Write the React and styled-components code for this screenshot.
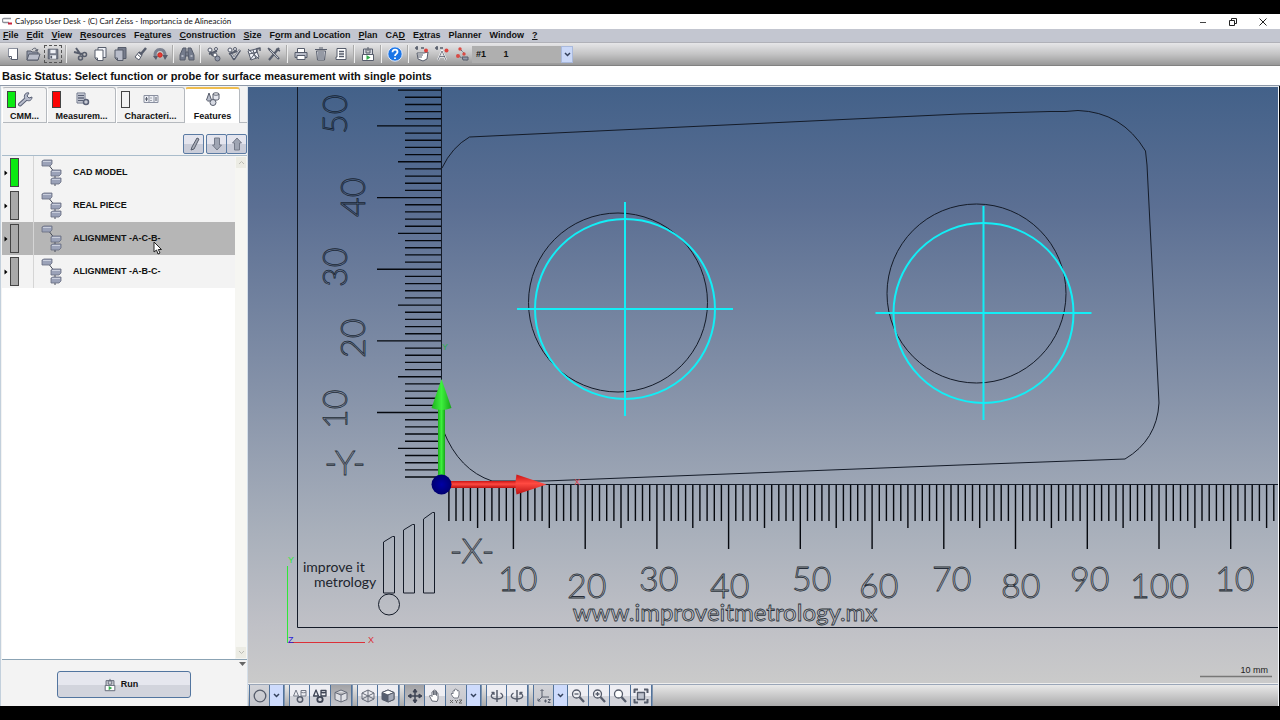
import React from "react";
import styled, { createGlobalStyle, css } from "styled-components";

const GlobalStyle = createGlobalStyle`
  * {
    box-sizing: border-box;
  }

  body {
    margin: 0;
    background: #000;
  }

  button, select {
    margin: 0;
    padding: 0;
    font: inherit;
    color: inherit;
    border: 0;
    background: none;
  }
`;

const Desk = styled.div`
  display: flex;
  flex-direction: column;
  height: 100vh;
  padding: 14px 0;
  font: bold 9px/11px "Liberation Sans", Arial, sans-serif;
  color: #111;
  background: #000;
`;

const TitleBar = styled.header`
  display: flex;
  align-items: center;
  flex: none;
  height: 15px;
  padding: 0 2px;
  background: #fff;
`;

const Title = styled.h1`
  flex: 1;
  margin: 0 0 0 2px;
  font: 400 8px/15px Lato, "Open Sans", sans-serif;
  color: #111;
`;

const WindowButton = styled.button`
  display: grid;
  place-items: center;
  width: 30px;
  height: 15px;
`;

const MenuBar = styled.nav`
  display: flex;
  flex: none;
  gap: 8px;
  height: 14px;
  padding: 0 3px;
  background: #c3c6d0;
  border-bottom: 1px solid #b0b1b8;
`;

const MenuItem = styled.button`
  line-height: 13px;
`;

const ToolBar = styled.div`
  display: flex;
  align-items: center;
  flex: none;
  height: 23px;
  padding: 0 3px;
  background: linear-gradient(#e6e6e8, #c4c4c5 50%, #989898);
  border-bottom: 1px solid #818181;
`;

const ToolButton = styled.button`
  display: grid;
  place-items: center;
  width: 20px;
  height: 20px;
  ${({ $active }) =>
    $active &&
    css`
      width: 18px;
      height: 18px;
      margin: 0 1px;
      border: 1px dashed #555;
    `}
`;

const Separator = styled.span`
  width: 1px;
  height: 18px;
  margin: 0 3px;
  background: #eee;
  box-shadow: -1px 0 #aaa;
`;

const ProbePicker = styled.label`
  display: grid;
  grid-template-columns: 89px 12px;
  height: 17px;
  background: #afafaf;
`;

const ProbeSelect = styled.select`
  grid-area: 1 / 1 / 2 / 3;
  padding-left: 4px;
  appearance: none;
  outline: none;
`;

const Chevron = styled.span`
  display: grid;
  place-items: center;
  background: #cad8f8;
  border: 1px solid #a9b9dc;
  pointer-events: none;
`;

const PickerChevron = styled(Chevron)`
  grid-area: 1 / 2;
`;

const Status = styled.p`
  flex: none;
  height: 19px;
  margin: 0;
  padding: 0 2px;
  font-size: 11px;
  line-height: 20px;
  background: #fff;
`;

const Workspace = styled.main`
  display: grid;
  grid-template-columns: 247px minmax(0, 1fr);
  flex: 1;
  min-height: 0;
  border-top: 1px solid #8d98a8;
`;

const Sidebar = styled.aside`
  display: flex;
  flex-direction: column;
  min-height: 0;
  padding-left: 1px;
  background: #f3f3f3;
  border-left: 1px solid #c3d0dc;
`;

const TabList = styled.div`
  display: flex;
  flex: none;
  height: 37px;
  padding-top: 1px;
  border-bottom: 1px solid #b5b9be;
`;

const Tab = styled.button`
  display: grid;
  grid-template: 20px 14px / 9px 1fr 9px;
  align-items: center;
  justify-items: center;
  width: ${({ $wide }) => ($wide ? 69 : 45)}px;
  height: 36px;
  padding: 1px 4px;
  border: 1px solid #b5b9be;
  border-left-color: #fff;
  border-bottom: 0;
  border-radius: 3px 3px 0 0;
  ${({ $selected }) =>
    $selected &&
    css`
      width: 55px;
      padding-top: 0;
      background: #fff;
      border-top: 2px solid #f0bd4e;
    `}
`;

const TabLabel = styled.span`
  grid-column: 1 / 4;
  line-height: 12px;
  white-space: nowrap;
`;

const TabIcon = styled.span`
  grid-column: 2;
  grid-row: 1;
  display: grid;
`;

const Swatch = styled.span`
  width: 9px;
  height: 17px;
  background: ${({ $color }) => $color};
  border: 1px solid #444;
`;

const TreeActions = styled.div`
  display: flex;
  justify-content: flex-end;
  align-items: flex-end;
  flex: none;
  height: 32px;
  padding-bottom: 1px;
`;

const ActionButton = styled.button`
  display: grid;
  place-items: center;
  width: 21px;
  height: 20px;
  background: linear-gradient(#e4e5ee 50%, #c9ccd8 50%);
  border: 1px solid #5b7ba3;
  border-radius: 2px;
  margin-left: ${({ $joined }) => ($joined ? "-1px" : "2px")};
`;

const TreeFrame = styled.div`
  display: grid;
  grid-template-columns: minmax(0, 1fr) 12px;
  flex: 1;
  min-height: 0;
  background: #fff;
  border-top: 1px solid #a9bccb;
  border-bottom: 1px solid #8ba3b4;
`;

const Tree = styled.ul`
  margin: 0;
  padding: 0;
  list-style: none;
`;

const TreeRow = styled.button`
  display: grid;
  grid-template-columns: 8px 10px 13px 31px 1fr;
  align-items: center;
  width: 100%;
  height: 33px;
  text-align: left;
  background: ${({ $selected }) => ($selected ? "#b6b6b6" : "#f3f3f3")};
`;

const TreeSwatch = styled(Swatch)`
  height: 29px;
`;

const TreeIconCell = styled.span`
  display: grid;
  align-items: center;
  grid-column: 4;
  height: 33px;
  padding-left: 7px;
  border-left: 1px solid #d5d5d5;
`;

const TreeLabel = styled.span`
  position: relative;
  justify-self: start;
  padding-left: 9px;
`;

const Pointer = styled.svg`
  position: absolute;
  right: -2px;
  top: 8px;
`;

const ScrollTrack = styled.div`
  display: flex;
  flex-direction: column;
  justify-content: space-between;
  padding: 1px;
  background: #f6f6f2;
`;

const ScrollButton = styled.button`
  display: grid;
  place-items: center;
  height: 11px;
  background: #ecece4;
`;

const SidebarFooter = styled.footer`
  display: grid;
  grid-template-columns: 1fr 134px 1fr;
  flex: none;
  height: 46px;
  padding-top: 11px;
`;

const RunButton = styled.button`
  grid-column: 2;
  display: flex;
  align-items: center;
  justify-content: center;
  gap: 4px;
  height: 27px;
  margin: 0 1px 0 -1px;
  padding-right: 6px;
  background: linear-gradient(#e6e7ee 50%, #d2d4dc 50%);
  border: 1px solid #52759f;
  border-radius: 3px;
`;

const Collapse = styled.svg`
  justify-self: end;
  margin: -9px 1px 0 0;
`;

const Viewer = styled.section`
  display: grid;
  grid-template-rows: minmax(0, 1fr) 22px;
  min-width: 0;
  min-height: 0;
  margin-right: 1px;
  border-left: 1px solid #d5dfe9;
  border-right: 1px solid #f4f7fa;
  border-top: 1px solid #dfe5ea;
`;

const Scene = styled.svg`
  display: block;
  width: 100%;
  height: 100%;
  min-height: 0;
  border-bottom: 1px solid #eee;
`;

const Engraving = styled.text`
  font: 300 34px Lato, sans-serif;
  fill: none;
  stroke: #0d1522;
  stroke-width: 0.8px;
  opacity: 0.85;
`;

const Website = styled(Engraving)`
  font-size: 24px;
  font-weight: 400;
  text-anchor: middle;
`;

const Brand = styled.text`
  font: 400 14px Lato, sans-serif;
  fill: #20242c;
`;

const AxisLabel = styled.text`
  font: 400 9px "Liberation Sans", sans-serif;
`;

const ViewBar = styled.div`
  display: flex;
  gap: 5px;
  padding: 0 1px;
  background: linear-gradient(#e9e9e9, #aaaaab);
  border-top: 1px solid #9aa6b8;
`;

const ViewGroup = styled.div`
  display: flex;
  border-left: 1px solid #52739b;
  box-shadow: 1px 0 #7f93ad;
`;

const buttonFill = {
  raised: "linear-gradient(#eeeef3 50%, #d3d4da 50%)",
  pressed: "linear-gradient(#a2a2a5, #c6c7cc)",
  soft: "linear-gradient(#d2d3d8, #c5c6cc)",
};

const ViewButton = styled.button`
  display: grid;
  place-items: center;
  width: 21px;
  background: ${({ $fill = "raised" }) => buttonFill[$fill]};
  border-right: 1px solid #52739b;

  &:first-child {
    width: 20px;
  }
`;

const ViewDrop = styled(ViewButton)`
  width: 14px;
  background: #cedbfc;
`;

const DARK = "#565c6b";
const METAL = "#9298a8";
const PALE = "#eef0f6";

const Icon = ({ children, size = 16 }) => (
  <svg
    width={size}
    height={size}
    viewBox="0 0 16 16"
    fill="none"
    stroke={DARK}
    strokeWidth="1"
    strokeLinejoin="round"
    aria-hidden="true"
  >
    {children}
  </svg>
);

const Down = () => (
  <svg width="7" height="5" viewBox="0 0 7 5" fill="none" stroke="#34415c" strokeWidth="1.5" aria-hidden="true">
    <path d="M1 1l2.500 2.500L6 1" />
  </svg>
);

const icons = {
  page: (
    <>
      <path d="M3.500 2.500h9v11H6.500l-3-3z" fill="#fff" stroke="#8b909d" />
      <path d="M12.500 2.500v11H6.500M3.500 10.500h3v3" />
    </>
  ),
  open: (
    <>
      <path d="M2 5h4l1 1h6v8H2z" fill={METAL} />
      <path d="M4 8h11l-2 6H2z" fill="#b9bdc9" />
      <path d="M7 4c2-3 5-2 5 1M10 4l2 1 1-2" />
    </>
  ),
  save: (
    <>
      <path d="M2.500 2.500h11v11h-11z" fill="#777d8b" />
      <path d="M5 3h6v4H5zM4.500 9.500h7v4h-7z" fill={PALE} stroke="none" />
      <path d="M6 10v3" strokeWidth="2" />
    </>
  ),
  cut: (
    <>
      <path d="M4 2l5 7M2 6l8 2" strokeWidth="2" />
      <circle cx="8.500" cy="12" r="2" strokeWidth="1.500" />
      <circle cx="12.500" cy="8.500" r="2" strokeWidth="1.500" />
    </>
  ),
  copy: (
    <>
      <path d="M6 1.500h8v10H6z" fill={PALE} />
      <path d="M3 4h8v10.500H5.500L3 12z" fill="#fff" />
      <path d="M3 12h2.500v2.500" />
    </>
  ),
  paste: (
    <>
      <path d="M6 1.500h8v11H6z" fill="#767c8c" />
      <path d="M3 4h8v10.500H5.500L3 12z" fill="#b9bdca" />
      <path d="M3 12h2.500v2.500" />
    </>
  ),
  brush: (
    <>
      <path d="M14 2L9 8" strokeWidth="2.500" />
      <path d="M7 6l3 3-3 5-4-3z" fill="#fff" />
      <path d="M7 6l3 3" strokeWidth="2" />
      <path d="M5.500 8.500l3 2.500" />
    </>
  ),
  recall: (
    <>
      <path d="M3.500 11C2 6 5 3.500 8 3.500s5 2 5 6.500" strokeWidth="3" stroke="#7b8190" />
      <path d="M10.500 9H16l-3 5zM1 10h5l-2 4z" fill={DARK} stroke="none" />
      <circle cx="8" cy="9" r="2.200" fill="#e63b35" stroke="#c92820" />
    </>
  ),
  binoculars: (
    <>
      <path d="M4 2h3v5l-1 7H1V9zM12 2H9v5l1 7h5V9z" fill="#747b8c" />
      <path d="M7 6h2v4H7z" fill={METAL} />
      <path d="M2.500 10h2M11.500 10h2" stroke={PALE} />
    </>
  ),
  probes: (
    <>
      <circle cx="4" cy="4" r="2" fill={PALE} />
      <circle cx="10" cy="3" r="1.500" fill={PALE} />
      <path d="M3 8l8-3M4 6l3 4" strokeWidth="2" />
      <circle cx="9" cy="9" r="2" fill="#fff" />
      <circle cx="11.500" cy="12.500" r="2.500" fill={METAL} />
    </>
  ),
  probeCheck: (
    <>
      <circle cx="4" cy="4" r="2" fill={PALE} />
      <circle cx="9" cy="3" r="1.500" fill={PALE} />
      <path d="M3 8l8-3" strokeWidth="2" />
      <path d="M5 8l3 5 6-9" strokeWidth="2.500" />
      <path d="M5.500 8l2.500 4 5.500-8" stroke={PALE} strokeWidth=".8" />
    </>
  ),
  grid: (
    <>
      <path d="M2 5l8-2 3 8-8 3z" fill={PALE} />
      <path d="M2 3l11 10M13 2L4 14M3 8l9-2M7 4l3 9" />
      <path d="M10 3l4-1v3" strokeWidth="1.500" />
    </>
  ),
  tools: (
    <>
      <path d="M3 3l10 10M13 2L3 14" strokeWidth="2.200" />
      <path d="M2 2l3 3M10 3l4 2" strokeWidth="1.500" />
      <path d="M4 4l8 8" stroke={PALE} strokeWidth=".7" />
    </>
  ),
  print: (
    <>
      <path d="M4.500 6V2.500h7V6" fill="#fff" />
      <path d="M2 6.500h12v5H2z" fill="#b8bcc8" />
      <path d="M4 9.500h8v4H4z" fill="#fff" />
    </>
  ),
  trash: (
    <>
      <path d="M3.500 5h9l-1 9h-7z" fill="#d4d7df" />
      <path d="M2 3.500h12M6 2h4M6 6v7M8 6v7M10 6v7" />
    </>
  ),
  report: (
    <>
      <path d="M4 2.500h9v11H3V11h1z" fill="#fff" />
      <path d="M6 5.500h5M6 8h5M6 10.500h5" strokeWidth="1.300" />
    </>
  ),
  machine: (
    <>
      <path d="M3.500 8V3h9v5M6 3v4h4V3M8 1v4" fill="#d7d9e0" />
      <path d="M2.500 8.500h11v6h-11z" fill="#fff" />
      <path d="M6.500 9v5l4-2.500z" fill="#33ad4b" stroke="none" />
    </>
  ),
  help: (
    <>
      <circle cx="8" cy="8" r="7.200" fill="#1c75e6" stroke="#dfeafc" />
      <path d="M5.500 6.200c0-3.500 5-3.200 5-.2 0 2-2.500 1.800-2.500 4M8 11.500v1.500" stroke="#fff" strokeWidth="1.800" />
    </>
  ),
  handProbe: (
    <>
      <path d="M1 2h3M3 0v4M7 2h3" strokeWidth="1.500" />
      <path d="M3 7h7l4-1-1 7-4 2-5-2z" fill="#fff" />
      <path d="M4 9h5M4 11h4" />
      <circle cx="12" cy="4.500" r="2" fill="#df423d" stroke="none" />
    </>
  ),
  autoProbe: (
    <>
      <path d="M1 2h3M3 0v4M6 2h3" strokeWidth="1.500" />
      <path d="M4 14L8 5l4 9M6 10.500h5" stroke="#fff" strokeWidth="2" />
      <path d="M4 14L8 5l4 9M6 10.500h5" strokeWidth=".8" />
      <circle cx="12.500" cy="4.500" r="2" fill="#df423d" stroke="none" />
    </>
  ),
  path: (
    <>
      <path d="M5 2l6 6M3 9l5 3 5 2" strokeDasharray="2 1" />
      <path d="M8 11h6v3H9z" fill={METAL} />
      <circle cx="6" cy="3" r="1.700" fill="#d94b45" stroke="none" />
      <circle cx="4" cy="10" r="2" fill="#d94b45" stroke="none" />
      <circle cx="10" cy="8" r="1.700" fill="#d94b45" stroke="none" />
    </>
  ),
  wrench: (
    <>
      <path d="M3 13.500L9 8" stroke="#596075" strokeWidth="4" strokeLinecap="round" />
      <path d="M8 8C6 4 9 1 12 2L10 5l2 2 3-1c0 4-4 5-7 2z" fill="#b7bccb" stroke="#596075" />
      <path d="M3 13.500L9 8" stroke="#b7bccb" strokeWidth="2" strokeLinecap="round" />
    </>
  ),
  plan: (
    <>
      <path d="M3 2h8v10H3z" fill="#dfe2ea" stroke="#6c7488" />
      <path d="M4 4.500h6M4 7h6M4 9.500h5" stroke="#596075" strokeWidth="1.300" />
      <circle cx="12" cy="11" r="2.500" fill="#c8cbd5" stroke="#596075" strokeWidth="1.500" />
    </>
  ),
  tolerance: (
    <>
      <path d="M1 4.500h14v7H1zM6 4.500v7M11 4.500v7" fill="#eceef3" stroke="#8a90a0" />
      <path d="M3.500 6v4M2 8h3M8 6.500v1M8 9v1M12 7h2M12 9h2" />
    </>
  ),
  shapes: (
    <>
      <path d="M4 2L1.500 9c1 1.500 4 1.500 5 0z" fill="#b9becb" />
      <path d="M8 3v5c1 1.500 5 1.500 6 0V3" fill="#e6e8ef" />
      <ellipse cx="11" cy="3" rx="3" ry="1.200" fill="#fff" />
      <circle cx="8" cy="11.500" r="3" fill="#d6d9e2" />
    </>
  ),
  pencil: (
    <path d="M11 2l2 1-5 10-3 1 1-3z" fill="#a9adb8" />
  ),
  arrowDown: (
    <path d="M5.500 2h5v7h2L8 14 3.500 9h2z" fill="#9fa5b3" stroke="#747a89" />
  ),
  arrowUp: (
    <path d="M5.500 14h5V7h2L8 2 3.500 7h2z" fill="#9fa5b3" stroke="#747a89" />
  ),
  circle: <circle cx="8" cy="8" r="5.800" strokeWidth="1.300" />,
  outlineShapes: (
    <>
      <path d="M4 2L1.500 8h5zM9 2.500h5V8H9zM9 4c1 1 4 1 5 0" stroke="#757a87" />
      <circle cx="8" cy="11.500" r="2.700" strokeWidth="1.500" />
    </>
  ),
  darkShapes: (
    <g stroke="#3e4454">
      <path d="M4 2L1.500 8h5zM9 2.500h5V8H9zM9 4c1 1 4 1 5 0" strokeWidth="1.300" />
      <circle cx="8" cy="11.500" r="2.700" strokeWidth="1.800" />
    </g>
  ),
  cube: (
    <path d="M8 2l6 2.500v7L8 14l-6-2.500v-7zM2 4.500L8 7l6-2.500M8 7v7" fill="#dfe0e5" stroke="#666b78" />
  ),
  wireCube: (
    <path d="M8 2l6 3v6l-6 3-6-3V5zM2 5l6 3 6-3M8 8v6M8 2v6M2 11l6-3 6 3" stroke="#666b78" />
  ),
  solidCube: (
    <>
      <path d="M8 2l6 2.500v7L8 14l-6-2.500v-7z" fill="#565e70" />
      <path d="M8 2l6 2.500L8 7 2 4.500z" fill="#fff" />
      <path d="M8 7l6-2.500v7L8 14z" fill="#a4a9b7" />
    </>
  ),
  move: (
    <g stroke="#3e4454">
      <path d="M8 2v12M2 8h12" strokeWidth="1.500" />
      <path d="M8 1l2 3H6zM8 15l2-3H6zM1 8l3-2v4zM15 8l-3-2v4z" fill="#3e4454" />
    </g>
  ),
  hand: (
    <path
      d="M5 13L2.500 8l1-1L5 8.500V4q1-1 1.500 0v3V2.500q1-1 1.500 0V7 3q1-1 1.500 0v4.500V5q1.500-1 1.500 1v5l-1 2.500z"
      fill="#fff"
      stroke="#656a76"
    />
  ),
  handXyz: (
    <>
      <path d="M5 9L3 6l1-1 1 1V3q1-1 1.500 0V1.500q1-1 1.500 0V2q1-1 1.500 0v1q1-1 1.500 0v4L10 10H6z" fill="#fff" stroke="#7b7f89" />
      <path d="M2 12l3 3M5 12l-3 3M7 12l1.500 1.500L10 12M8.500 13.500V15M11 12h3l-3 3h3" stroke="#666" />
    </>
  ),
  rotateLeft: (
    <>
      <path d="M8 2v12" strokeWidth="1.500" />
      <path d="M4.500 5C0 8 3 11 8 11s8-3 3.500-6M2.500 4.500h2.500V7" strokeWidth="1.300" />
    </>
  ),
  rotateRight: (
    <>
      <path d="M8 2v12" strokeWidth="1.500" />
      <path d="M11.500 5C16 8 13 11 8 11S0 8 4.500 5M13.500 4.500H11V7" strokeWidth="1.300" />
    </>
  ),
  axes: (
    <>
      <path d="M6 9V2M6 9l-4 4M6 9h7M4.500 3L6 1.500 7.500 3M2 10.500V13h2.500" />
      <path d="M8 13h3M9.500 11.500v3M12 11.500h2.500L12 14.500h2.500" />
    </>
  ),
  zoomOut: (
    <>
      <circle cx="6.500" cy="6" r="4" fill="#f0f0f4" strokeWidth="1.300" />
      <path d="M4.500 6h4" strokeWidth="1.300" />
      <path d="M9.500 9l4.500 5" strokeWidth="2.300" />
    </>
  ),
  zoomIn: (
    <>
      <circle cx="6.500" cy="6" r="4" fill="#f0f0f4" strokeWidth="1.300" />
      <path d="M4.500 6h4M6.500 4v4" strokeWidth="1.300" />
      <path d="M9.500 9l4.500 5" strokeWidth="2.300" />
    </>
  ),
  zoom: (
    <>
      <circle cx="6.500" cy="6" r="4" fill="#fff" strokeWidth="1.300" />
      <path d="M9.500 9l4.500 5" strokeWidth="2.300" />
    </>
  ),
  fit: (
    <>
      <path d="M1.500 5V1.500H5M11 1.500h3.500V5M14.500 11v3.500H11M5 14.500H1.500V11" strokeWidth="2" />
      <path d="M4.500 4.500h7v7h-7z" fill="#bfc3ce" strokeWidth="1.300" />
    </>
  ),
};

const menus = [
  ["", "F", "ile"],
  ["", "E", "dit"],
  ["", "V", "iew"],
  ["", "R", "esources"],
  ["Fe", "a", "tures"],
  ["", "C", "onstruction"],
  ["", "S", "ize"],
  ["F", "o", "rm and Location"],
  ["", "P", "lan"],
  ["CA", "D", ""],
  ["E", "x", "tras"],
  ["Planner", "", ""],
  ["Window", "", ""],
  ["", "?", ""],
];

const tools = [
  ["page", "open", "save"],
  ["cut", "copy", "paste", "brush", "recall"],
  ["binoculars"],
  ["probes", "probeCheck", "grid", "tools"],
  ["print", "trash", "report"],
  ["machine"],
  ["help"],
  ["handProbe", "autoProbe", "path"],
];

const tabs = [
  { label: "CMM...", color: "#0bea12", icon: "wrench" },
  { label: "Measurem...", color: "#fb0505", icon: "plan", wide: true },
  { label: "Characteri...", color: "#f3f3f3", icon: "tolerance", wide: true },
  { label: "Features", icon: "shapes", selected: true },
];

const features = [
  { label: "CAD MODEL", color: "#0bea12" },
  { label: "REAL PIECE", color: "#a9a9a9" },
  { label: "ALIGNMENT -A-C-B-", color: "#a9a9a9", selected: true },
  { label: "ALIGNMENT -A-B-C-", color: "#a9a9a9" },
];

const viewTools = [
  ["circle", "drop"],
  ["outlineShapes", "darkShapes", "cube"],
  ["wireCube", "solidCube"],
  ["move", "hand", "handXyz", "drop"],
  ["rotateLeft", "rotateRight"],
  ["axes", "drop", "zoomOut", "zoomIn", "zoom", "fit"],
];

const fills = {
  circle: "soft",
  handXyz: "soft",
  axes: "soft",
  cube: "pressed",
  move: "pressed",
};

const xNumbers = [
  [498, 591, "10"],
  [567, 598, "20"],
  [639, 591, "30"],
  [710, 598, "40"],
  [792, 591, "50"],
  [859, 598, "60"],
  [932, 591, "70"],
  [1001, 598, "80"],
  [1070, 591, "90"],
  [1130, 598, "100"],
  [1215, 591, "10"],
];

const yNumbers = [
  [347, 134, "50"],
  [365, 217, "40"],
  [347, 287, "30"],
  [365, 358, "20"],
  [347, 429, "10"],
];

const tickLength = (n, lengths) => (n % 10 === 0 ? lengths[2] : n % 5 === 0 ? lengths[1] : lengths[0]);

const range = (count) => Array.from({ length: count }, (_, i) => i + 1);

const xTicks = range(116)
  .map((n) => `M${(441.7 + n * 7.173).toFixed(1)} 485v${tickLength(n, [36, 43, 64])}`)
  .join("");

const yTicks = range(55)
  .map((n) => `M441 ${(484.2 - n * 7.165).toFixed(1)}h-${tickLength(n, [36, 43, 64])}`)
  .join("");

const Target = ({ x, y }) => (
  <g fill="none" stroke="#12eef6" strokeWidth="2">
    <circle cx={x} cy={y} r="90" />
    <path d={`M${x - 108} ${y}h216M${x} ${y - 107}v214`} />
  </g>
);

const TreeGlyph = () => (
  <svg width="22" height="28" viewBox="0 0 22 28" aria-hidden="true">
    <path d="M7 5l7 9v13" stroke="#444a58" fill="none" />
    <g fill="#9ba2b8" stroke="#646b7f" strokeWidth=".8">
      <path d="M1 2l2-1h8v4l-2 2H1z" />
      <path d="M10 12l2-1h8v4l-2 2h-8z" />
      <path d="M10 20l2-1h8v4l-2 2h-8z" />
    </g>
    <path d="M2 2.500h8M11 12.500h8M11 20.500h8" stroke="#c9cedc" />
  </svg>
);

const CadScene = () => (
  <Scene role="img" aria-label="CAD view">
    <defs>
      <linearGradient id="sky" x1="0" y1="0" x2="0" y2="1">
        <stop offset="0" stopColor="#436189" />
        <stop offset=".2" stopColor="#5b6f93" />
        <stop offset=".5" stopColor="#8491a8" />
        <stop offset=".75" stopColor="#a9b0bb" />
        <stop offset=".9" stopColor="#bfc0c6" />
        <stop offset="1" stopColor="#cacaca" />
      </linearGradient>
      <linearGradient id="green">
        <stop offset="0" stopColor="#1fb01f" />
        <stop offset=".5" stopColor="#3df03d" />
        <stop offset="1" stopColor="#18a418" />
      </linearGradient>
      <linearGradient id="red" x1="0" y1="0" x2="0" y2="1">
        <stop offset="0" stopColor="#c91414" />
        <stop offset=".45" stopColor="#ff4a42" />
        <stop offset="1" stopColor="#b81010" />
      </linearGradient>
      <radialGradient id="origin">
        <stop offset="0" stopColor="#0000a5" />
        <stop offset="1" stopColor="#000070" />
      </radialGradient>
    </defs>
    <rect width="100%" height="100%" fill="url(#sky)" />
    <g transform="translate(-248 -87)">
      <g fill="none" stroke="#141b28">
        <path d="M297.500 80V627.500H2400M441.500 80V484.500H2400" />
        <path d={xTicks + yTicks} stroke="#05080e" strokeWidth="1.400" />
        <path d="M442 168Q452 147 469.500 137L960 114 1050 111.500H1065L1078 110.500Q1122 112 1145.500 151L1147 165 1159 403Q1157 440 1125 459L960 465 545 481H492Q459 470 443.500 431" />
        <circle cx="618" cy="302.500" r="89.500" />
        <circle cx="976.500" cy="293.500" r="89.500" />
        <path d="M383.500 593V542l9-5.500h2V593zM403.500 593V530l9-5.500h2V593zM423.500 593V519l9-6.500h2V593z" />
        <circle cx="389" cy="604.500" r="10.500" />
      </g>
      <Target x={625} y={309} />
      <Target x={983.5} y={313} />

      {xNumbers.map(([x, y, label]) => (
        <Engraving key={x} x={x} y={y}>{label}</Engraving>
      ))}
      {yNumbers.map(([x, y, label]) => (
        <Engraving key={y} transform={`translate(${x} ${y}) rotate(-90)`}>{label}</Engraving>
      ))}
      <Engraving x="345" y="475" textAnchor="middle">-Y-</Engraving>
      <Engraving x="472" y="563" textAnchor="middle">-X-</Engraving>
      <Website x="725" y="621">www.improveitmetrology.mx</Website>
      <Brand x="303" y="572">improve it</Brand>
      <Brand x="314" y="587">metrology</Brand>

      <path d="M438 484V406h7v78z" fill="url(#green)" />
      <path d="M441.500 379l10 29q-10 4-20 0z" fill="url(#green)" />
      <path d="M450 481h68v7h-68z" fill="url(#red)" />
      <path d="M546.500 484.500l-30-10q-2 10 0 20z" fill="url(#red)" />
      <circle cx="441.500" cy="484.500" r="10" fill="url(#origin)" />
      <AxisLabel x="442" y="350" fill="#2fae50">Y</AxisLabel>
      <AxisLabel x="574" y="485" fill="#d8404c">X</AxisLabel>

      <path d="M287.500 566v77" stroke="#2fe838" />
      <path d="M288 642.500h77" stroke="#dc3038" />
      <AxisLabel x="288" y="563" fill="#2fe838">Y</AxisLabel>
      <AxisLabel x="368" y="643" fill="#dc3038">X</AxisLabel>
      <AxisLabel x="288" y="643" fill="#2b20d8">Z</AxisLabel>
    </g>
    <svg x="100%" y="100%" overflow="visible">
      <AxisLabel x="-10" y="-10" textAnchor="end" fill="#222">10 mm</AxisLabel>
      <path d="M-78 -6.500h72" stroke="#777" strokeWidth="1.500" />
    </svg>
  </Scene>
);

export default function App() {
  return (
    <Desk>
      <GlobalStyle />
      <TitleBar>
        <svg width="11" height="9" viewBox="0 0 11 9" fill="none" aria-hidden="true">
          <path d="M9 1.500H2Q.5 1.500.5 3v1Q.5 5.500 2 5.500h5" stroke="#8d9099" strokeWidth="1.300" />
          <path d="M6 6.500h4" stroke="#c8243c" strokeWidth="2" />
        </svg>
        <Title>Calypso User Desk - (C) Carl Zeiss - Importancia de Alineación</Title>
        <WindowButton aria-label="Minimize">
          <svg width="8" height="8" stroke="#444"><path d="M1 4.500h6" /></svg>
        </WindowButton>
        <WindowButton aria-label="Restore">
          <svg width="8" height="8" stroke="#222" fill="none"><path d="M.5 2.500h5v5h-5zM2.500 2V.5h5v5H6" /></svg>
        </WindowButton>
        <WindowButton aria-label="Close">
          <svg width="8" height="8" stroke="#222"><path d="M.5 .5l7 7M7.500 .5l-7 7" /></svg>
        </WindowButton>
      </TitleBar>

      <MenuBar>
        {menus.map(([before, key, after]) => (
          <MenuItem key={before + key + after}>
            {before}
            {key && <u>{key}</u>}
            {after}
          </MenuItem>
        ))}
      </MenuBar>

      <ToolBar>
        {tools.map((group, index) => (
          <React.Fragment key={group[0]}>
            {index > 0 && <Separator />}
            {group.map((name) => (
              <ToolButton key={name} aria-label={name} $active={name === "save"}>
                <Icon size={name === "save" ? 14 : 16}>{icons[name]}</Icon>
              </ToolButton>
            ))}
          </React.Fragment>
        ))}
        <ProbePicker>
          <ProbeSelect aria-label="Probe">
            <option>{"#1\u00a0\u00a0\u00a0\u00a0\u00a0\u00a0\u00a01"}</option>
          </ProbeSelect>
          <PickerChevron><Down /></PickerChevron>
        </ProbePicker>
      </ToolBar>

      <Status>Basic Status: Select function or probe for surface measurement with single points</Status>

      <Workspace>
        <Sidebar>
          <TabList role="tablist">
            {tabs.map(({ label, color, icon, wide, selected }) => (
              <Tab key={label} role="tab" aria-selected={!!selected} $wide={wide} $selected={selected}>
                {color && <Swatch $color={color} />}
                <TabIcon><Icon>{icons[icon]}</Icon></TabIcon>
                <TabLabel>{label}</TabLabel>
              </Tab>
            ))}
          </TabList>

          <TreeActions>
            <ActionButton aria-label="Edit"><Icon>{icons.pencil}</Icon></ActionButton>
            <ActionButton aria-label="Move down"><Icon>{icons.arrowDown}</Icon></ActionButton>
            <ActionButton aria-label="Move up" $joined><Icon>{icons.arrowUp}</Icon></ActionButton>
          </TreeActions>

          <TreeFrame>
            <Tree>
              {features.map(({ label, color, selected }) => (
                <li key={label}>
                  <TreeRow $selected={selected}>
                    <svg width="7" height="6" aria-hidden="true"><path d="M2.500 .5v5L5.500 3z" /></svg>
                    <TreeSwatch $color={color} />
                    <TreeIconCell><TreeGlyph /></TreeIconCell>
                    <TreeLabel>
                      {label}
                      {selected && (
                        <Pointer width="9" height="14" viewBox="0 0 9 14" fill="#fff" stroke="#222">
                          <path d="M1 1v10l2.500-2 1.500 4 2-1-1.700-3.500H8.500z" />
                        </Pointer>
                      )}
                    </TreeLabel>
                  </TreeRow>
                </li>
              ))}
            </Tree>
            <ScrollTrack>
              <ScrollButton aria-label="Scroll up">
                <svg width="7" height="5" fill="none" stroke="#bcbcb4"><path d="M1 4l2.500-2.500L6 4" /></svg>
              </ScrollButton>
              <ScrollButton aria-label="Scroll down">
                <svg width="7" height="5" fill="none" stroke="#bcbcb4"><path d="M1 1l2.500 2.500L6 1" /></svg>
              </ScrollButton>
            </ScrollTrack>
          </TreeFrame>

          <SidebarFooter>
            <RunButton>
              <Icon size={14}>{icons.machine}</Icon>
              Run
            </RunButton>
            <Collapse width="7" height="4" fill="#666"><path d="M0 0h7L3.500 4z" /></Collapse>
          </SidebarFooter>
        </Sidebar>

        <Viewer>
          <CadScene />
          <ViewBar>
            {viewTools.map((group) => (
              <ViewGroup key={group[0]}>
                {group.map((name) =>
                  name === "drop" ? (
                    <ViewDrop key={name} aria-label="More"><Down /></ViewDrop>
                  ) : (
                    <ViewButton key={name} aria-label={name} $fill={fills[name]}>
                      <Icon>{icons[name]}</Icon>
                    </ViewButton>
                  )
                )}
              </ViewGroup>
            ))}
          </ViewBar>
        </Viewer>
      </Workspace>
    </Desk>
  );
}
